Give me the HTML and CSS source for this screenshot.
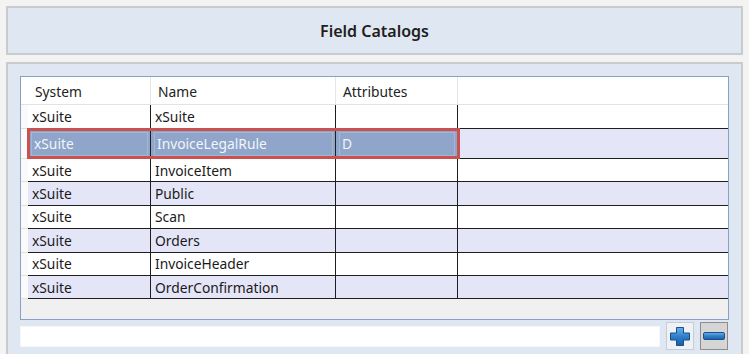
FILE: index.html
```html
<!DOCTYPE html>
<html lang="en">
<head>
  <meta charset="UTF-8">
  <title>Field Catalogs</title>
  <link rel="stylesheet" href="styles.css">
</head>
<body>

  <div class="head-panel">
    <div class="title">Field Catalogs</div>
  </div>

  <div class="main-panel">
    <div class="grid">
      <div class="row head">
        <div class="strip"></div>
        <div class="cell">System</div>
        <div class="cell">Name</div>
        <div class="cell">Attributes</div>
        <div class="cell last"></div>
      </div>
      <div class="row">
        <div class="strip"></div>
        <div class="cell">xSuite</div>
        <div class="cell">xSuite</div>
        <div class="cell"></div>
        <div class="cell last"></div>
      </div>
      <div class="row alt selected">
        <div class="strip"></div>
        <div class="cell">xSuite</div>
        <div class="cell">InvoiceLegalRule</div>
        <div class="cell">D</div>
        <div class="cell last"></div>
      </div>
      <div class="row">
        <div class="strip"></div>
        <div class="cell">xSuite</div>
        <div class="cell">InvoiceItem</div>
        <div class="cell"></div>
        <div class="cell last"></div>
      </div>
      <div class="row alt">
        <div class="strip"></div>
        <div class="cell">xSuite</div>
        <div class="cell">Public</div>
        <div class="cell"></div>
        <div class="cell last"></div>
      </div>
      <div class="row">
        <div class="strip"></div>
        <div class="cell">xSuite</div>
        <div class="cell">Scan</div>
        <div class="cell"></div>
        <div class="cell last"></div>
      </div>
      <div class="row alt">
        <div class="strip"></div>
        <div class="cell">xSuite</div>
        <div class="cell">Orders</div>
        <div class="cell"></div>
        <div class="cell last"></div>
      </div>
      <div class="row">
        <div class="strip"></div>
        <div class="cell">xSuite</div>
        <div class="cell">InvoiceHeader</div>
        <div class="cell"></div>
        <div class="cell last"></div>
      </div>
      <div class="row alt">
        <div class="strip"></div>
        <div class="cell">xSuite</div>
        <div class="cell">OrderConfirmation</div>
        <div class="cell"></div>
        <div class="cell last"></div>
      </div>
    </div>

    <div class="toolbar">
      <input type="text" class="filter">
      <button class="btn add" title="Add">
        <svg width="20" height="19" viewBox="0 0 20 19">
          <defs>
            <linearGradient id="blueA" x1="0" y1="0" x2="0" y2="1">
              <stop offset="0" stop-color="#6cb2ee"/>
              <stop offset="0.5" stop-color="#2f7fcc"/>
              <stop offset="1" stop-color="#1a5ea6"/>
            </linearGradient>
          </defs>
          <path d="M6.5 0.5H13.5V6H19.5V13H13.5V18.5H6.5V13H0.5V6H6.5Z" fill="url(#blueA)" stroke="#1d4f87" stroke-linejoin="round"/>
        </svg>
      </button>
      <button class="btn remove" title="Remove">
        <svg width="22" height="8" viewBox="0 0 22 8">
          <defs>
            <linearGradient id="blueB" x1="0" y1="0" x2="0" y2="1">
              <stop offset="0" stop-color="#6cb2ee"/>
              <stop offset="0.5" stop-color="#2f7fcc"/>
              <stop offset="1" stop-color="#1a5ea6"/>
            </linearGradient>
          </defs>
          <rect x="0.5" y="0.5" width="21" height="7" rx="1.5" fill="url(#blueB)" stroke="#1d4f87"/>
        </svg>
      </button>
    </div>
  </div>

</body>
</html>
```

FILE: styles.css
```css
body {
  margin: 0;
  padding: 6px 6px 0 6px;
  background: #f3f3f3;
  font-family: 'Noto Sans', sans-serif;
  font-size: 13.8px;
  color: #1a1a1a;
  height: 354px;
  box-sizing: border-box;
  overflow: hidden;
}

.head-panel {
  height: 49px;
  box-sizing: border-box;
  border: 2px solid #cbcbcb;
  background: #dfe7f2;
  display: flex;
  align-items: center;
  justify-content: center;
}

.title {
  font-size: 16px;
  font-weight: 600;
  color: #1e1e1e;
}

.main-panel {
  margin-top: 7px;
  height: 300px;
  box-sizing: border-box;
  border: 2px solid #cbcbcb;
  border-bottom: none;
  background: #dfe7f2;
  padding: 12px 12px 0 12px;
}

.grid {
  height: 244px;
  box-sizing: border-box;
  border: 1px solid #87a1c6;
  background: #f0f0f0;
}

.row {
  display: grid;
  grid-template-columns: 7px 123px 185px 122px 1fr;
  height: 23.4px;
  background: #fff;
  position: relative;
}

.row.alt {
  background: #e5e5f8;
}

.cell {
  display: flex;
  align-items: center;
  padding-left: 4px;
  border-right: 1px solid #1e1e1e;
  border-bottom: 1px solid #1e1e1e;
  white-space: nowrap;
  overflow: hidden;
}

.cell.last {
  border-right: none;
}

.strip {
  background: #fafafa;
  border-bottom: 1px solid #e2e2e2;
}

.row.head {
  height: 28px;
  background: #fff;
}

.row.head .cell {
  padding-left: 7px;
  padding-top: 2px;
  border-right-color: #e6e6e6;
  border-bottom-color: #e3e3e3;
  color: #222;
}

.row.head .strip {
  background: #fff;
  border-bottom-color: #e3e3e3;
}

.row.head + .row {
  height: 24px;
}

.row.selected {
  height: 30px;
}

.row.selected .cell:not(.last) {
  background: #8fa5c9;
  color: #f3f5fa;
  outline: 1px solid #a5b6d4;
  outline-offset: -4px;
  padding-left: 6px;
}

.row.selected::after {
  content: '';
  position: absolute;
  left: 6px;
  top: -1px;
  width: 433px;
  height: 31px;
  box-sizing: border-box;
  border: 3px solid #c9514f;
  pointer-events: none;
}

.toolbar {
  margin-top: 2px;
  display: flex;
  align-items: center;
  gap: 6px;
}

.filter {
  flex: 1;
  height: 21px;
  box-sizing: border-box;
  border: 1px solid #f4f6f9;
  background: #fff;
  margin: 0;
  padding: 0 4px;
}

.btn {
  width: 28px;
  height: 28px;
  padding: 0;
  margin: 0;
  box-sizing: border-box;
  display: flex;
  align-items: center;
  justify-content: center;
  cursor: pointer;
}

.btn.add {
  background: #eef1f5;
  border: 1px solid #c6cdd5;
}

.btn.remove {
  background: #d5d5d5;
  border: 1px solid #8d8d8d;
  margin-right: 1px;
}
```
